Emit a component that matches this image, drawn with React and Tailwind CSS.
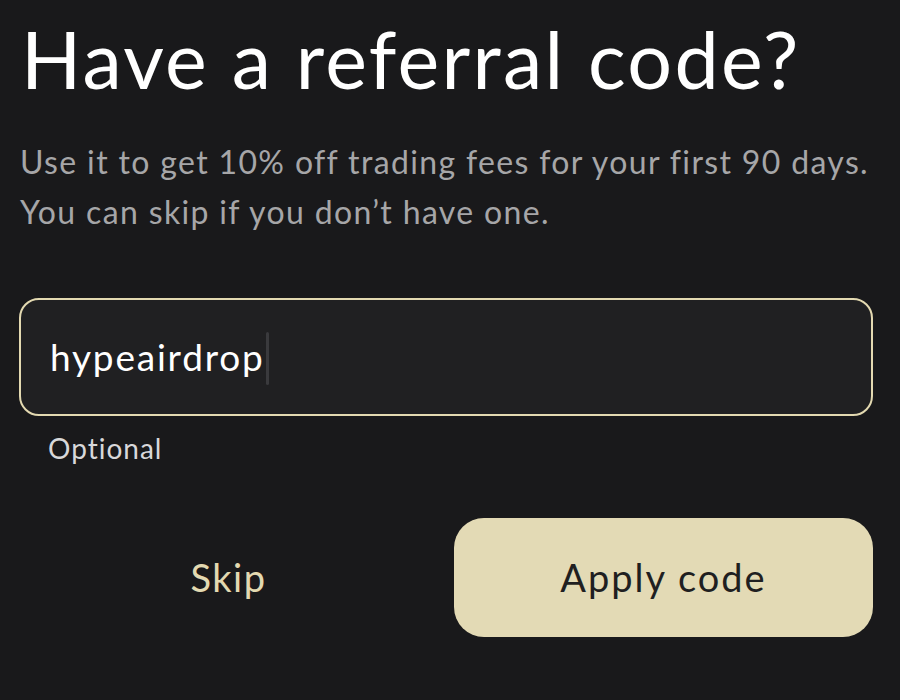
import { useState } from 'react';

const App = () => {
  const [code] = useState('hypeairdrop');

  return (
    <div
      className="w-[900px] h-[700px] bg-[#19191b] overflow-hidden pl-[19px] pr-[27px]"
      style={{ fontFamily: 'Lato, "Noto Sans", sans-serif' }}
    >
      <h1 className="text-white text-[79px] leading-none font-normal pt-[19px] pl-[2px] tracking-[2.3px]">
        Have a referral code?
      </h1>

      <p className="text-[#a6a6a8] text-[32px] leading-[50px] mt-[39px] pl-[1px] tracking-[1.35px]">
        Use it to get 10% off trading fees for your first 90 days.
        <br />
        You can skip if you don’t have one.
      </p>

      {/* input field */}
      <div className="mt-[61px] h-[118px] rounded-[20px] border-2 border-[#e3d9b1] bg-[#202022] flex items-center px-[29px]">
        <span className="text-white text-[37px] tracking-[1.8px]">{code}</span>
        <span className="w-[3px] h-[53px] bg-[#3a3a3d] rounded-sm ml-[1px] mt-[2px]" />
      </div>
      <div className="text-[#d8d8da] text-[28px] mt-[11px] pl-[29px] tracking-[1px]">Optional</div>

      <div className="grid grid-cols-2 gap-4 mt-[49px]">
        <button className="h-[119px] text-[#e3d9b1] text-[38px] tracking-[1.5px]">Skip</button>
        <button className="h-[119px] rounded-[30px] bg-[#e3dab5] text-[#1f1f21] text-[38px] tracking-[2px]">
          Apply code
        </button>
      </div>
    </div>
  );
};

export default App;
